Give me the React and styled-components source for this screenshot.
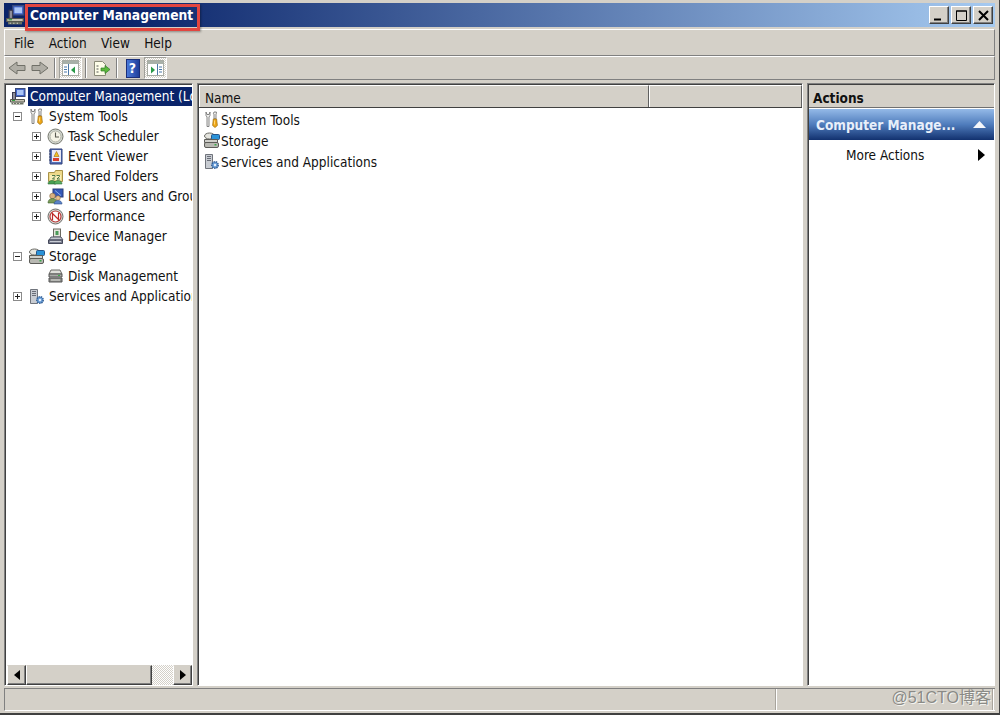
import React from 'react';
import styled, { createGlobalStyle } from 'styled-components';

const GlobalStyle = createGlobalStyle`
html, body {
  margin: 0;
  padding: 0;
  background: #d4d0c8;
}
* {
  box-sizing: border-box;
}
`;

const Window = styled.div`
  position: relative;
  width: 1000px;
  height: 715px;
  display: flex;
  flex-direction: column;
  padding: 3px 4px 2px 4px;
  background: #d4d0c8;
  border-right: 1px solid #404040;
  border-bottom: 2px solid #404040;
  font-family: "DejaVu Sans Condensed", "DejaVu Sans", sans-serif;
  font-size: 13.5px;
  color: #111;
  overflow: hidden;
`;

const TitleBar = styled.div`
  height: 24px;
  flex: none;
  display: flex;
  align-items: center;
  padding: 0 2px 0 1px;
  background: linear-gradient(to right, #0a246a 0%, #0a246a 12%, #a6caf0 100%);
`;

const TitleText = styled.span`
  margin-left: 5px;
  flex: 1;
  color: #fff;
  font-weight: bold;
  font-size: 13.7px;
`;

const CaptionButton = styled.button`
  width: 20px;
  height: 18px;
  margin-left: 2px;
  padding: 0;
  display: flex;
  align-items: center;
  justify-content: center;
  background: #d4d0c8;
  border: 1px solid;
  border-color: #fff #404040 #404040 #fff;
  box-shadow: inset -1px -1px 0 #808080;
`;

const Annotation = styled.div`
  position: absolute;
  left: 25px;
  top: 4px;
  width: 175px;
  height: 27px;
  border: 3px solid #e2453f;
  box-shadow: 1px 1px 2px rgba(0, 0, 0, 0.35);
  pointer-events: none;
`;

const MenuBar = styled.div`
  height: 27px;
  flex: none;
  margin-top: 2px;
  display: flex;
  align-items: center;
  padding-left: 9px;
  gap: 14.4px;
  border-top: 1px solid #fff;
  border-left: 1px solid #fff;
  border-bottom: 1px solid #808080;
  border-right: 1px solid #808080;
`;

const Toolbar = styled.div`
  height: 24px;
  flex: none;
  display: flex;
  align-items: center;
  border-top: 1px solid #fff;
  border-left: 1px solid #fff;
  border-bottom: 1px solid #808080;
  border-right: 1px solid #808080;
`;

const ToolSlot = styled.div`
  width: 23px;
  height: 22px;
  display: flex;
  align-items: center;
  justify-content: center;
  background: ${props => props.$on
    ? 'repeating-conic-gradient(#fff 0 25%, #d4d0c8 0 50%) 0 0 / 2px 2px'
    : 'transparent'};
  border: ${props => props.$on ? '1px solid' : 'none'};
  border-color: #a0a09a #fff #fff #a0a09a;
`;

const ToolDivider = styled.div`
  width: 2px;
  height: 20px;
  margin: 0 3px;
  border-left: 1px solid #808080;
  border-right: 1px solid #fff;
`;

const Panes = styled.div`
  flex: 1;
  min-height: 0;
  margin-top: 3px;
  display: grid;
  grid-template-columns: 189px 606px 188px;
  gap: 4px;
`;

const Pane = styled.div`
  display: flex;
  flex-direction: column;
  min-width: 0;
  background: #fff;
  border: 1px solid;
  border-color: #808080 #fff #fff #808080;
  box-shadow: inset 1px 1px 0 #404040;
  padding: 1px 0 0 1px;
  overflow: hidden;
`;

const Tree = styled.div`
  flex: 1;
  min-height: 0;
  padding-top: 1px;
  overflow: hidden;
`;

const TreeRow = styled.div`
  height: 20px;
  display: flex;
  align-items: center;
  white-space: nowrap;
  padding-left: ${props => 7 + props.$level * 19}px;
`;

const Expander = styled.span`
  width: 9px;
  height: 9px;
  flex: none;
  margin-right: 6px;
  display: flex;
  align-items: center;
  justify-content: center;
  border: 1px solid #8a8a8a;
  background: #fff;
`;

const ExpanderGap = styled.span`
  width: 15px;
  flex: none;
`;

const RowIcon = styled.span`
  width: 17px;
  height: 17px;
  flex: none;
  margin-right: 4px;
  display: flex;
`;

const RootRow = styled.div`
  height: 20px;
  display: flex;
  align-items: center;
  white-space: nowrap;
  padding-left: 3px;

  ${RowIcon} {
    margin-right: 2px;
  }
`;

const Selected = styled.span`
  flex: 1;
  min-width: 0;
  height: 19px;
  line-height: 19px;
  padding-left: 2px;
  background: #0a246a;
  color: #fff;
  overflow: hidden;
`;

const ScrollBar = styled.div`
  height: 20px;
  flex: none;
  margin-left: 1px;
  display: flex;
  background: repeating-conic-gradient(#fff 0 25%, #d4d0c8 0 50%) 0 0 / 2px 2px;
`;

const ScrollButton = styled.div`
  width: 19px;
  flex: none;
  display: flex;
  align-items: center;
  justify-content: center;
  background: #d4d0c8;
  border: 1px solid;
  border-color: #d4d0c8 #404040 #404040 #fff;
  box-shadow: inset -1px -1px 0 #808080;
`;

const ScrollThumb = styled(ScrollButton)`
  width: 126px;
  margin-right: auto;
`;

const ListHeader = styled.div`
  height: 23px;
  flex: none;
  display: flex;
  background: #d4d0c8;
  border-bottom: 1px solid #404040;
`;

const HeaderCell = styled.div`
  width: ${props => props.$w};
  flex: ${props => props.$w ? 'none' : 1};
  padding: 4px 0 0 5px;
  border-top: 1px solid #fff;
  border-left: 1px solid #fff;
  border-right: 1px solid #606060;
`;

const List = styled.div`
  padding: 1px 0 0 4px;
`;

const ListRow = styled.div`
  height: 21px;
  display: flex;
  align-items: center;
  white-space: nowrap;

  ${RowIcon} {
    margin-right: 1px;
  }
`;

const ActionsHeader = styled.div`
  height: 23px;
  flex: none;
  padding: 5px 0 0 4px;
  font-weight: bold;
  background: #d4d0c8;
  border-bottom: 1px solid #707070;
`;

const ActionsBand = styled.div`
  height: 31px;
  flex: none;
  display: flex;
  align-items: center;
  justify-content: space-between;
  padding: 0 8px 0 7px;
  margin-top: 1px;
  color: #e8effa;
  font-weight: bold;
  background: linear-gradient(to bottom, #94bae8 0%, #4f7cbc 50%, #12316f 100%);
`;

const ActionRow = styled.div`
  height: 30px;
  flex: none;
  display: flex;
  align-items: center;
  justify-content: space-between;
  padding: 0 9px 0 37px;
`;

const StatusBar = styled.div`
  height: 23px;
  flex: none;
  margin-top: 2px;
  display: flex;
  border-top: 1px solid #808080;
  border-bottom: 1px solid #fff;
  border-left: 1px solid #808080;
`;

const StatusCell = styled.div`
  flex: ${props => props.$w ? 'none' : 1};
  width: ${props => props.$w};
  border-right: 1px solid #fff;
  box-shadow: inset -1px 0 0 #a8a49c;
  margin-right: 1px;
`;

const Watermark = styled.div`
  position: absolute;
  right: 8px;
  bottom: 5px;
  font-family: "Liberation Sans", "Noto Sans CJK SC", sans-serif;
  font-size: 16px;
  color: #8a8a86;
  text-shadow: 1px 1px 0 #f4f4f0;
`;

const HelpBox = styled.span`
  width: 14px;
  height: 19px;
  display: flex;
  align-items: center;
  justify-content: center;
  background: linear-gradient(to right, #4a78d8, #1f3f9c);
  border: 1px solid #1a2f7a;
  color: #fff;
  font-weight: bold;
  font-size: 14px;
`;

const Svg = ({ size = 17, children }) => (
  <svg width={size} height={size} viewBox="0 0 17 17">{children}</svg>
);

const ComputerIcon = ({ size }) => (
  <Svg size={size}>
    <rect x="6.500" y="0.500" width="9.500" height="8" fill="#3f63c8" stroke="#3a4a7a" />
    <rect x="8" y="2" width="6.500" height="5" fill="#a9c4f5" />
    <rect x="3.500" y="4.500" width="3" height="7" fill="#8d8d98" stroke="#3c3c50" />
    <path d="M1.500 11.500h14v2.500h-14z" fill="#c7c3b4" stroke="#55574f" />
    <path d="M2.500 14.500h12v2h-12z" fill="#6d7264" />
    <path d="M3 12.500h3" stroke="#32a040" />
    <path d="M4 15.500h1M7 15.500h1M10 15.500h1" stroke="#d8d8cc" />
  </Svg>
);

const ToolsIcon = () => (
  <Svg>
    <path d="M3 1v3.500l1 1.500v9.500h2V6l1-1.500V1L6 3.500H4z" fill="#f4f4f2" stroke="#6a6a6a" strokeWidth="0.800" />
    <path d="M11 1h2.400v1.500L13 3v5h-2V3l-.6-.5z" fill="#f0f0ee" stroke="#6a6a6a" strokeWidth="0.800" />
    <path d="M10.300 8h3.300l.8 6.500-2.400 2-2.400-2z" fill="#f0a818" stroke="#9a6a10" strokeWidth="0.700" />
    <path d="M11.500 9.500v4" stroke="#ffd878" />
  </Svg>
);

const ClockIcon = () => (
  <Svg>
    <circle cx="8.500" cy="8.500" r="7.500" fill="#d4d8d2" stroke="#77796f" />
    <circle cx="8.500" cy="8.500" r="5.500" fill="#f5f3e6" stroke="#aeb0a4" />
    <path d="M8.500 4.500V9H12" fill="none" stroke="#5a5a50" strokeWidth="1.100" />
  </Svg>
);

const ViewerIcon = () => (
  <Svg>
    <path d="M3 1h12v15H3z" fill="#5470b8" stroke="#2e3e78" />
    <path d="M5 2h9v12H5z" fill="#e8e8f4" />
    <path d="M2 3h2M2 6h2M2 9h2M2 12h2" stroke="#30406a" />
    <path d="M9.500 3.500l2.500 5H7z" fill="#f0c020" stroke="#a06a10" strokeWidth="0.600" />
    <path d="M6 10h6v3H6z" fill="#d84030" />
  </Svg>
);

const FolderIcon = () => (
  <Svg>
    <path d="M1.500 4.500h6l1-2h7v11h-14z" fill="#eed98a" stroke="#a89248" />
    <path d="M3 7h11v5H3z" fill="#f8eeb8" />
    <path d="M5 7.500h3v1L5.500 11H8M9.500 7.500h3v1L10 11h3" fill="none" stroke="#3a6a3a" strokeWidth="0.900" />
    <path d="M1 16c0-2.500 2-3.500 4-3.500s4 1 4 3.500z" fill="#48a050" stroke="#2e6a38" strokeWidth="0.600" />
    <path d="M7 16c0-2.500 2-3.500 4-3.500s4 1 4 3.500z" fill="#58b060" stroke="#2e6a38" strokeWidth="0.600" />
  </Svg>
);

const UsersIcon = () => (
  <Svg>
    <rect x="6" y="1" width="10" height="8" fill="#3458b8" stroke="#2a3c78" />
    <path d="M8 2.500l6 5" stroke="#8ab0ec" />
    <circle cx="5.500" cy="8" r="2.800" fill="#d8b080" stroke="#886840" strokeWidth="0.600" />
    <path d="M1 15c0-3 2-4.500 4.500-4.500S10 12 10 15z" fill="#7a9a58" stroke="#3a6028" strokeWidth="0.600" />
    <circle cx="11" cy="10" r="2.300" fill="#e8c090" stroke="#886840" strokeWidth="0.600" />
    <path d="M7 16c0-2.500 2-3.500 4-3.500s4 1 4 3.500z" fill="#5a84c8" stroke="#2c4c88" strokeWidth="0.600" />
  </Svg>
);

const PerfIcon = () => (
  <Svg>
    <circle cx="8.500" cy="8.500" r="7.500" fill="#d8d8d4" stroke="#70706c" />
    <circle cx="8.500" cy="8.500" r="5.500" fill="#fff" stroke="#b83a38" strokeWidth="1.200" />
    <path d="M5.500 12V5.500l6 6V5" fill="none" stroke="#c02a28" strokeWidth="1.200" />
  </Svg>
);

const DeviceIcon = () => (
  <Svg>
    <rect x="6.500" y="1" width="7" height="8" fill="#e4e4dc" stroke="#6a6a60" />
    <rect x="8.500" y="3" width="3" height="4" fill="#4a9a58" />
    <path d="M4 9h10l2 3H2z" fill="#c4c6cc" stroke="#55586a" />
    <path d="M1.500 12h14v3.500h-14z" fill="#7c8090" stroke="#44485a" />
    <path d="M3 13.500h11" stroke="#c8ccd4" />
  </Svg>
);

const StorageIcon = () => (
  <Svg>
    <ellipse cx="6.500" cy="4" rx="5" ry="3" fill="#e4e4de" stroke="#6a6a64" />
    <rect x="8.500" y="2.500" width="8" height="5" rx="1" fill="#2a92d8" stroke="#24558a" />
    <path d="M1.500 7.500h13v3h-13z" fill="#cfcfca" stroke="#5c5c58" />
    <rect x="1.500" y="10.500" width="14" height="5" rx="1.500" fill="#b8b8b2" stroke="#5c5c58" />
    <rect x="11.500" y="12" width="2" height="1.500" fill="#38a848" />
  </Svg>
);

const DiskIcon = () => (
  <Svg>
    <path d="M4 2h9l2 4H2z" fill="#dedfda" stroke="#6a6a66" />
    <path d="M2 6h13v3H2z" fill="#a8aaa6" stroke="#555" />
    <path d="M2 10h13v4H2z" fill="#8e908c" stroke="#555" />
    <rect x="11" y="7" width="2" height="1" fill="#3ab048" />
    <path d="M4 12h9" stroke="#e0e0dc" />
  </Svg>
);

const ServicesIcon = () => (
  <Svg>
    <path d="M2.500 1.500h7v14h-7z" fill="#c8ccd2" stroke="#70747c" />
    <path d="M4 3.500h4M4 5.500h4M4 7.500h4" stroke="#6a6e78" />
    <circle cx="12" cy="12" r="3.200" fill="#6a9ed8" stroke="#3a6498" strokeDasharray="1.400 0.800" strokeWidth="1.600" />
    <circle cx="12" cy="12" r="1.200" fill="#e8f0fa" />
  </Svg>
);

const ArrowIcon = ({ flip }) => (
  <svg width="18" height="14" viewBox="0 0 18 14" style={flip ? { transform: 'scaleX(-1)' } : undefined}>
    <path d="M1 4.500h8V1l8 6-8 6V9.500H1z" fill="#b0aea6" stroke="#707068" />
  </svg>
);

const PaneToggleIcon = ({ side }) => (
  <svg width="17" height="16" viewBox="0 0 17 16">
    <rect x="0.500" y="0.500" width="16" height="15" fill="#fff" stroke="#a8aca4" />
    <rect x="1" y="1" width="15" height="3" fill="#a8b0a8" />
    {side === 'left' ? (
      <>
        <path d="M6.500 4v11M2 7h3M2 9.500h3M2 12h3" stroke="#4a78a8" fill="none" />
        <path d="M13 6.500v7L9 10z" fill="#2a9a48" />
      </>
    ) : (
      <>
        <path d="M10.500 4v11M12 7h3M12 9.500h3M12 12h3" stroke="#4a78a8" fill="none" />
        <path d="M4 6.500v7L8 10z" fill="#2a9a48" />
      </>
    )}
  </svg>
);

const ExportIcon = () => (
  <svg width="18" height="17" viewBox="0 0 18 17">
    <path d="M1.500 1.500h8l3 3v11h-11z" fill="#fdfde8" stroke="#8a8a78" />
    <path d="M3.500 6h2M3.500 9h2M3.500 12h2" stroke="#555" />
    <path d="M8 8h4V5.500l5 4-5 4V11H8z" fill="#5cb83c" stroke="#2f7a28" strokeWidth="0.700" />
  </svg>
);

const Plus = () => (
  <svg width="7" height="7" viewBox="0 0 7 7"><path d="M1 3.500h5M3.500 1v5" stroke="#222" /></svg>
);

const Minus = () => (
  <svg width="7" height="7" viewBox="0 0 7 7"><path d="M1 3.500h5" stroke="#222" /></svg>
);

const treeItems = [
  { level: 0, state: 'open', icon: <ToolsIcon />, label: 'System Tools' },
  { level: 1, state: 'closed', icon: <ClockIcon />, label: 'Task Scheduler' },
  { level: 1, state: 'closed', icon: <ViewerIcon />, label: 'Event Viewer' },
  { level: 1, state: 'closed', icon: <FolderIcon />, label: 'Shared Folders' },
  { level: 1, state: 'closed', icon: <UsersIcon />, label: 'Local Users and Groups' },
  { level: 1, state: 'closed', icon: <PerfIcon />, label: 'Performance' },
  { level: 1, icon: <DeviceIcon />, label: 'Device Manager' },
  { level: 0, state: 'open', icon: <StorageIcon />, label: 'Storage' },
  { level: 1, icon: <DiskIcon />, label: 'Disk Management' },
  { level: 0, state: 'closed', icon: <ServicesIcon />, label: 'Services and Applications' },
];

const listItems = [
  { icon: <ToolsIcon />, label: 'System Tools' },
  { icon: <StorageIcon />, label: 'Storage' },
  { icon: <ServicesIcon />, label: 'Services and Applications' },
];

function App() {
  const treeRows = treeItems.map((item) => (
    <TreeRow key={item.label} $level={item.level}>
      {item.state === 'open' && <Expander><Minus /></Expander>}
      {item.state === 'closed' && <Expander><Plus /></Expander>}
      {!item.state && <ExpanderGap />}
      <RowIcon>{item.icon}</RowIcon>
      {item.label}
    </TreeRow>
  ));

  return (
    <Window>
      <GlobalStyle />
      <TitleBar>
        <ComputerIcon size={20} />
        <TitleText>Computer Management</TitleText>
        <CaptionButton>
          <svg width="12" height="12" viewBox="0 0 12 12"><path d="M1 10.500h7" stroke="#000" strokeWidth="2" /></svg>
        </CaptionButton>
        <CaptionButton>
          <svg width="13" height="13" viewBox="0 0 13 13"><path d="M1.500 2h10v9.500h-10z M1 2h11" fill="none" stroke="#000" /></svg>
        </CaptionButton>
        <CaptionButton>
          <svg width="11" height="11" viewBox="0 0 11 11"><path d="M1 1l9 9M10 1l-9 9" stroke="#000" strokeWidth="2" /></svg>
        </CaptionButton>
      </TitleBar>
      <Annotation />
      <MenuBar>
        <span>File</span>
        <span>Action</span>
        <span>View</span>
        <span>Help</span>
      </MenuBar>
      <Toolbar>
        <ToolSlot><ArrowIcon flip /></ToolSlot>
        <ToolSlot><ArrowIcon /></ToolSlot>
        <ToolDivider />
        <ToolSlot $on><PaneToggleIcon side="left" /></ToolSlot>
        <ToolDivider />
        <ToolSlot><ExportIcon /></ToolSlot>
        <ToolDivider />
        <ToolSlot><HelpBox>?</HelpBox></ToolSlot>
        <ToolSlot $on><PaneToggleIcon side="right" /></ToolSlot>
      </Toolbar>
      <Panes>
        <Pane>
          <Tree>
            <RootRow>
              <RowIcon><ComputerIcon /></RowIcon>
              <Selected>Computer Management (Local)</Selected>
            </RootRow>
            {treeRows}
          </Tree>
          <ScrollBar>
            <ScrollButton>
              <svg width="6" height="10" viewBox="0 0 6 10"><path d="M6 0v10L0 5z" fill="#000" /></svg>
            </ScrollButton>
            <ScrollThumb />
            <ScrollButton>
              <svg width="6" height="10" viewBox="0 0 6 10"><path d="M0 0v10l6-5z" fill="#000" /></svg>
            </ScrollButton>
          </ScrollBar>
        </Pane>
        <Pane>
          <ListHeader>
            <HeaderCell $w="450px">Name</HeaderCell>
            <HeaderCell />
          </ListHeader>
          <List>
            {listItems.map((item) => (
              <ListRow key={item.label}>
                <RowIcon>{item.icon}</RowIcon>
                {item.label}
              </ListRow>
            ))}
          </List>
        </Pane>
        <Pane>
          <ActionsHeader>Actions</ActionsHeader>
          <ActionsBand>
            <span>Computer Manage...</span>
            <svg width="13" height="7" viewBox="0 0 13 7"><path d="M0 7L6.500 0 13 7z" fill="#f4f6fa" /></svg>
          </ActionsBand>
          <ActionRow>
            <span>More Actions</span>
            <svg width="7" height="12" viewBox="0 0 7 12"><path d="M0 0v12l7-6z" fill="#000" /></svg>
          </ActionRow>
        </Pane>
      </Panes>
      <StatusBar>
        <StatusCell $w="772px" />
        <StatusCell />
      </StatusBar>
      <Watermark>@51CTO博客</Watermark>
    </Window>
  );
}

export default App;
